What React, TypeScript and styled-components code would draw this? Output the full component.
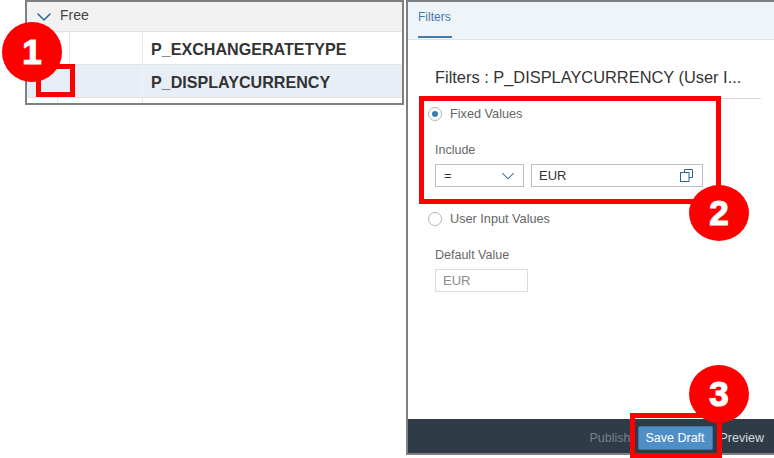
import styled, { createGlobalStyle } from "styled-components";
import { ChevronDown } from "lucide-react";

const GlobalStyle = createGlobalStyle`
  html, body {
    margin: 0;
    padding: 0;
    background: #ffffff;
  }
  body {
    font-family: "Liberation Sans", Arial, sans-serif;
    overflow: hidden;
  }
`;

const CopyIcon = () => (
  <svg width="13" height="13" viewBox="0 0 13 13" fill="none" stroke="#2f6497" strokeWidth="1">
    <path d="M4.5 3.5V0.5H12.5V8.5H9" />
    <rect x="0.5" y="3.5" width="8.5" height="9" />
  </svg>
);

export default function App() {
  return (
    <Page>
      <GlobalStyle />
      <TablePanel>
        <GroupHeader>
          <ChevronDown size={24} color="#2f6497" strokeWidth={1.5} />
          <span>Free</span>
        </GroupHeader>
        <Row>
          <Cell $width={43} />
          <Cell $width={73} />
          <NameCell>P_EXCHANGERATETYPE</NameCell>
        </Row>
        <Row $selected>
          <Cell $width={116} $selected />
          <NameCell>P_DISPLAYCURRENCY</NameCell>
        </Row>
        <LastRow>
          <Cell $width={31} />
          <Cell $width={85} />
          <NameCell />
        </LastRow>
      </TablePanel>

      <FilterPanel>
        <TabBar>
          <Tab>Filters</Tab>
        </TabBar>
        <Body>
          <Title>Filters : P_DISPLAYCURRENCY (User I...</Title>
          <Divider />
          <RadioRow>
            <Radio $checked />
            <RadioLabel>Fixed Values</RadioLabel>
          </RadioRow>
          <FieldLabel>Include</FieldLabel>
          <Inputs>
            <Select>
              <span>=</span>
              <ChevronDown size={22} color="#2f6497" strokeWidth={1.1} />
            </Select>
            <ValueInput>
              <span>EUR</span>
              <CopyIcon />
            </ValueInput>
          </Inputs>
          <SecondRadioRow>
            <Radio />
            <RadioLabel>User Input Values</RadioLabel>
          </SecondRadioRow>
          <DefaultLabel>Default Value</DefaultLabel>
          <DisabledInput>EUR</DisabledInput>
        </Body>
        <Footer>
          <Publish>Publish</Publish>
          <SaveButton>Save Draft</SaveButton>
          <Preview>Preview</Preview>
        </Footer>
      </FilterPanel>

      <Highlight $left={36} $top={64} $width={39} $height={33} />
      <Highlight $left={419} $top={96} $width={302} $height={108} />
      <Highlight $left={630} $top={413} $width={92} $height={45} />
      <Badge $left={2} $top={22} $height={60}>1</Badge>
      <Badge $left={689} $top={185} $height={56}>2</Badge>
      <Badge $left={689} $top={365} $height={58}>3</Badge>
    </Page>
  );
}

const Page = styled.div`
  position: relative;
  width: 774px;
  height: 458px;
  overflow: hidden;
  display: flex;
  align-items: flex-start;
  padding-left: 25px;
  box-sizing: border-box;
  background: #ffffff;
`;

const TablePanel = styled.div`
  width: 379px;
  height: 105px;
  box-sizing: border-box;
  border: 2px solid #808080;
  display: flex;
  flex-direction: column;
  background: #ffffff;
`;

const GroupHeader = styled.div`
  height: 30px;
  flex: none;
  box-sizing: border-box;
  display: flex;
  align-items: center;
  gap: 4px;
  padding-left: 5px;
  background: #f2f2f2;
  border-bottom: 1px solid #e4e4e4;
  color: #444444;
  font-size: 14px;

  span {
    position: relative;
    top: -2px;
  }
`;

const Row = styled.div<{ $selected?: boolean }>`
  height: 33px;
  flex: none;
  display: flex;
  box-sizing: border-box;
  border-bottom: 1px solid #e4e4e4;
  background: ${(p) => (p.$selected ? "#e8eef6" : "#ffffff")};
`;

const LastRow = styled.div`
  flex: 1;
  display: flex;
`;

const Cell = styled.div<{ $width: number; $selected?: boolean }>`
  width: ${(p) => p.$width}px;
  flex: none;
  box-sizing: border-box;
  border-right: 1px solid ${(p) => (p.$selected ? "#f2f5fa" : "#e8e8e8")};
`;

const NameCell = styled.div`
  flex: 1;
  display: flex;
  align-items: center;
  padding: 3px 0 0 8px;
  font-size: 16.1px;
  font-weight: 700;
  color: #333333;
`;

const FilterPanel = styled.div`
  width: 368px;
  height: 455px;
  margin-left: 2px;
  box-sizing: border-box;
  border: 2px solid #808080;
  border-right: none;
  display: flex;
  flex-direction: column;
  background: #ffffff;
`;

const TabBar = styled.div`
  height: 38px;
  flex: none;
  box-sizing: border-box;
  padding-left: 10px;
  background: #eff4f9;
  border-bottom: 1px solid #d9e4f0;
`;

const Tab = styled.div`
  display: inline-block;
  height: 36px;
  width: 34px;
  box-sizing: border-box;
  padding-top: 8px;
  border-bottom: 2px solid #427cac;
  color: #427cac;
  font-size: 12px;
`;

const Body = styled.div`
  flex: 1;
  padding: 27px 13px 0 20px;
`;

const Title = styled.div`
  height: 20px;
  padding-left: 7px;
  font-size: 16.4px;
  line-height: 20px;
  color: #333333;
  white-space: nowrap;
`;

const Divider = styled.div`
  height: 1px;
  margin-top: 11px;
  background: #d8d8d8;
`;

const RadioRow = styled.div`
  display: flex;
  align-items: center;
  gap: 8px;
  height: 14px;
  margin-top: 8px;
`;

const SecondRadioRow = styled(RadioRow)`
  margin-top: 25px;
`;

const Radio = styled.span<{ $checked?: boolean }>`
  width: 14px;
  height: 14px;
  box-sizing: border-box;
  border: 1px solid #b5b5b5;
  border-radius: 50%;
  display: flex;
  align-items: center;
  justify-content: center;

  &::after {
    content: "";
    display: ${(p) => (p.$checked ? "block" : "none")};
    width: 6px;
    height: 6px;
    border-radius: 50%;
    background: #427cac;
  }
`;

const RadioLabel = styled.span`
  font-size: 12.7px;
  color: #666666;
`;

const FieldLabel = styled.div`
  margin: 22px 0 0 7px;
  font-size: 12.5px;
  line-height: 15px;
  color: #666666;
`;

const DefaultLabel = styled(FieldLabel)`
  margin-top: 22px;
`;

const Inputs = styled.div`
  display: flex;
  gap: 7px;
  margin: 6px 0 0 7px;
`;

const Select = styled.div`
  width: 89px;
  height: 23px;
  box-sizing: border-box;
  border: 1px solid #c0c0c0;
  display: flex;
  align-items: center;
  justify-content: space-between;
  padding: 0 4px 0 8px;
  font-size: 13px;
  color: #333333;
`;

const ValueInput = styled(Select)`
  width: 172px;
  padding: 0 9px 0 7px;
  font-size: 13px;
`;

const DisabledInput = styled.div`
  width: 93px;
  height: 23px;
  box-sizing: border-box;
  margin: 6px 0 0 7px;
  padding-left: 7px;
  border: 1px solid #dcdcdc;
  font-size: 13px;
  line-height: 21px;
  color: #8c8c8c;
`;

const Footer = styled.div`
  height: 34px;
  flex: none;
  box-sizing: border-box;
  display: flex;
  align-items: center;
  justify-content: flex-end;
  padding: 3px 10px 0 0;
  background: #2f3c48;
  font-size: 12.5px;
`;

const Publish = styled.span`
  color: #75818c;
  margin-right: 7px;
`;

const SaveButton = styled.div`
  width: 75px;
  height: 24px;
  box-sizing: border-box;
  border: 1px solid #3d76a6;
  border-radius: 2px;
  background: #4f8fc8;
  color: #ffffff;
  display: flex;
  align-items: center;
  justify-content: center;
`;

const Preview = styled.span`
  color: #d5dadd;
  margin-left: 7px;
`;

const Highlight = styled.div<{ $left: number; $top: number; $width: number; $height: number }>`
  position: absolute;
  left: ${(p) => p.$left}px;
  top: ${(p) => p.$top}px;
  width: ${(p) => p.$width}px;
  height: ${(p) => p.$height}px;
  box-sizing: border-box;
  border: 5px solid #ff0000;
`;

const Badge = styled.div<{ $left: number; $top: number; $height: number }>`
  position: absolute;
  left: ${(p) => p.$left}px;
  top: ${(p) => p.$top}px;
  width: 60px;
  height: ${(p) => p.$height}px;
  border-radius: 50%;
  background: #ff0000;
  color: #ffffff;
  font-size: 35px;
  font-weight: 700;
  -webkit-text-stroke: 1.2px #ffffff;
  display: flex;
  align-items: center;
  justify-content: center;
`;
